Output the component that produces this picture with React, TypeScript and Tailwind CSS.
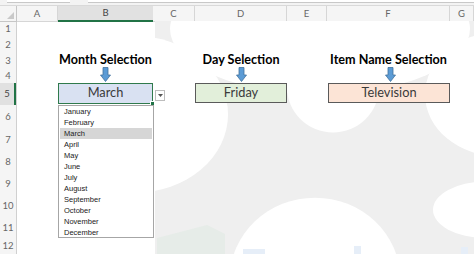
import React from "react";

const months = [
  "January", "February", "March", "April", "May", "June",
  "July", "August", "September", "October", "November", "December",
];

const letters = ["A", "B", "C", "D", "E", "F", "G"];

function DownArrow({ className = "" }: { className?: string }) {
  return (
    <svg width="11" height="15" viewBox="0 0 11 15" className={className}>
      <path d="M3 0.5 H8 V8 H10.5 L5.5 14.5 L0.5 8 H3 Z" fill="#5b9bd5" stroke="#41719c" strokeWidth="0.8" />
    </svg>
  );
}

function Watermark() {
  return (
    <svg viewBox="0 0 457 232" preserveAspectRatio="none" className="w-full h-full block">
      <rect x="138" y="0" width="319" height="232" fill="#efefef" />
      <ellipse cx="118" cy="93" rx="93" ry="78" fill="#fff" />
      <ellipse cx="303" cy="8" rx="150" ry="65" fill="#fff" />
      <ellipse cx="316" cy="66" rx="46" ry="45" fill="#fff" />
      <ellipse cx="483" cy="73" rx="75" ry="62" fill="#fff" />
      <ellipse cx="298" cy="256" rx="85" ry="80" fill="#fff" />
      <ellipse cx="468" cy="188" rx="52" ry="28" fill="#fff" />
      <polygon points="140,232 140,216 190,203 208,212 208,232" fill="#e6ece8" />
      <rect x="226" y="227" width="22" height="5" fill="#e6eef8" />
      <rect x="337" y="224" width="7" height="8" fill="#e6eef8" />
      <rect x="444" y="225" width="7" height="7" fill="#e6eef8" />
    </svg>
  );
}

export default function App() {
  return (
    <div className="w-[474px] h-[254px] overflow-hidden bg-white flex flex-col" style={{ fontFamily: "Lato, 'Liberation Sans', sans-serif" }}>
      {/* formula bar edge */}
      <div className="h-[6px] bg-[#f3f3f3] flex items-start border-b border-[#d9d9d9]">
        <div className="ml-[7px] w-[63px] h-[3px] bg-white border-b border-[#c8c8c8]" />
        <div className="ml-[18px] flex-1 h-[3px] bg-white border-b border-[#c8c8c8]" />
      </div>

      <div className="grid grid-cols-[17px_41px_95px_42px_92px_40px_123px_24px] grid-rows-[15px_16px_16px_16px_14px_22px_24px_22px_22px_22px_22px_22px_15px]">
        {/* column headers */}
        <div className="col-start-1 col-span-8 row-start-1 grid grid-cols-subgrid bg-[#f5f5f5] text-[9.5px] text-[#666]">
          <div className="relative border-r border-b border-[#c6c6c6]">
            <svg width="7" height="7" className="absolute right-[2px] bottom-[2px]">
              <polygon points="7,0 7,7 0,7" fill="#c9c9c9" />
            </svg>
          </div>
          {letters.map((l) => (
            <div
              key={l}
              className={
                l === "B"
                  ? "flex items-center justify-center bg-[#e1e1e1] border-b-2 border-[#217346] text-[#444]"
                  : "flex items-center justify-center border-r border-b border-[#d6d6d6]"
              }
            >
              {l}
            </div>
          ))}
        </div>

        {/* row headers */}
        <div className="col-start-1 row-start-2 row-span-12 grid grid-rows-subgrid bg-[#f5f5f5] border-r border-[#d0d0d0] text-[9.5px] text-[#666]">
          {Array.from({ length: 12 }, (_, i) => i + 1).map((n) => (
            <div
              key={n}
              className={
                n === 5
                  ? "flex items-center justify-center bg-[#e1e1e1] border-r-2 border-[#217346] text-[#444]"
                  : "flex items-center justify-center"
              }
            >
              {n}
            </div>
          ))}
        </div>

        {/* faint background artwork */}
        <div className="col-start-2 col-span-7 row-start-2 row-span-12">
          <Watermark />
        </div>

        {/* headings with arrows */}
        <div className="col-start-3 row-start-4 row-span-2 flex flex-col items-center justify-end">
          <span className="text-[12.6px] leading-[14px] font-bold text-black whitespace-nowrap">Month Selection</span>
          <DownArrow className="mb-[1px]" />
        </div>
        <div className="col-start-5 row-start-4 row-span-2 flex flex-col items-center justify-end">
          <span className="text-[12.6px] leading-[14px] font-bold text-black whitespace-nowrap">Day Selection</span>
          <DownArrow className="mb-[1px]" />
        </div>
        <div className="col-start-7 row-start-4 row-span-2 flex flex-col items-center justify-end">
          <span className="text-[12.6px] leading-[14px] font-bold text-black whitespace-nowrap">Item Name Selection</span>
          <DownArrow className="mb-[1px] ml-[3px]" />
        </div>

        {/* active cell with open list */}
        <div className="col-start-3 row-start-6 relative">
          <div className="relative h-[21px] bg-[#d9e1f2] border-[1.5px] border-[#2f7a4c] flex items-center justify-center pb-[2px] text-[12.8px] leading-none text-[#3a3a3a]">
            March
            <div className="absolute -right-[3px] -bottom-[3px] w-[5px] h-[5px] bg-[#217346] border border-white" />
          </div>
          <div className="absolute top-[22px] left-0 w-[96px] h-[133px] bg-white border border-[#a6a6a6] flex flex-col text-[7.5px] text-[#222]" style={{ fontFamily: "'Liberation Sans', Arial, sans-serif" }}>
            {months.map((m) => (
              <div key={m} className={m === "March" ? "h-[11px] flex items-center pl-[4px] bg-[#d6d6d6] mx-[1px]" : "h-[11px] flex items-center pl-[5px]"}>
                {m}
              </div>
            ))}
          </div>
        </div>
        <div className="col-start-4 row-start-6 pt-[7px] pl-[2px]">
          <div className="w-[10px] h-[11px] bg-white border border-[#bdbdbd] flex items-center justify-center">
            <svg width="5" height="3" viewBox="0 0 5 3">
              <polygon points="0,0 5,0 2.5,3" fill="#555" />
            </svg>
          </div>
        </div>

        <div className="col-start-5 row-start-6">
          <div className="h-[20px] bg-[#e2efda] border border-[#5a5a5a] flex items-center justify-center pb-[1px] text-[12.8px] leading-none text-[#3a3a3a]">
            Friday
          </div>
        </div>
        <div className="col-start-7 row-start-6 pl-[1px]">
          <div className="h-[20px] bg-[#fce4d6] border border-[#5a5a5a] flex items-center justify-center pb-[1px] text-[12.8px] leading-none text-[#3a3a3a]">
            Television
          </div>
        </div>
      </div>
    </div>
  );
}
